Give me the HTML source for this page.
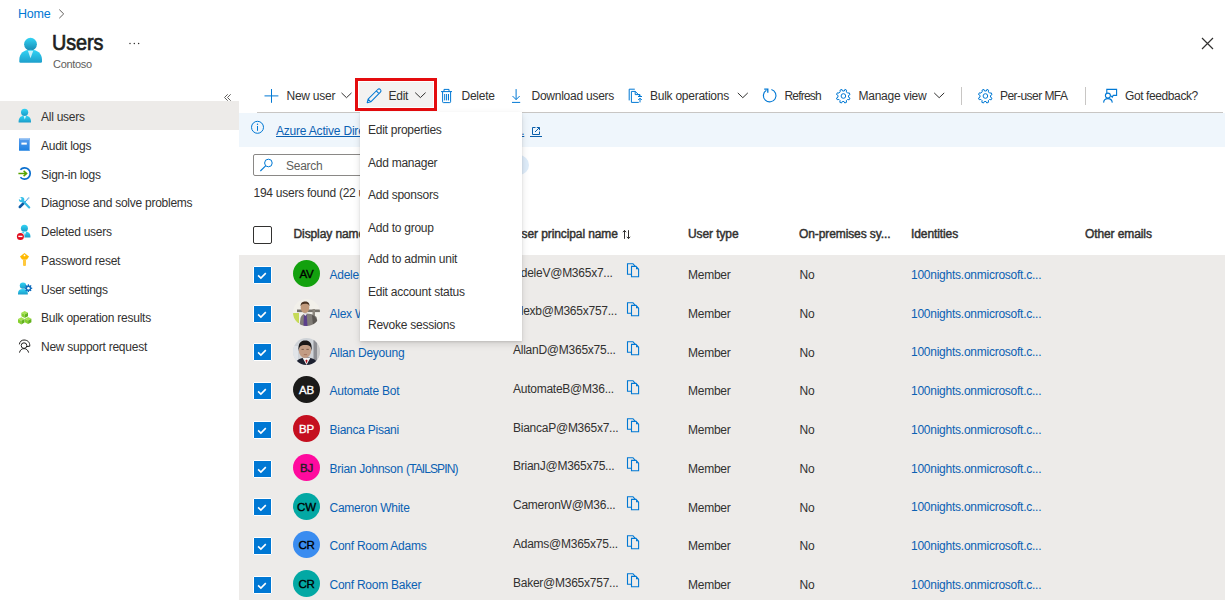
<!DOCTYPE html>
<html><head><meta charset="utf-8">
<style>
*{margin:0;padding:0;box-sizing:border-box}
html,body{width:1225px;height:600px;overflow:hidden;background:#fff}
body{position:relative;font-family:"Liberation Sans",sans-serif;color:#323130;font-size:12px;letter-spacing:-0.25px}
.a{position:absolute}
.t{position:absolute;white-space:nowrap;line-height:12px;font-size:12px}
svg{position:absolute;overflow:visible}
.nav{position:absolute;left:0;width:239px;height:28.75px}
.nav .t{left:41px;top:10px}
.row{position:absolute;left:239px;width:986px;height:38.75px;background:#edebe9}
.hd{font-weight:normal;font-size:12px;letter-spacing:-0.1px;-webkit-text-stroke:0.45px #323130}
.lnk{color:#0b61b3}
.cb{position:absolute;left:253.1px;width:18.8px;height:18px;background:#0078d4;border:1px solid #fff;border-radius:1px}
.av{position:absolute;left:293px;width:27px;height:27px;border-radius:50%;font-size:11.5px;line-height:28.5px;text-align:center;color:#000;letter-spacing:-0.2px;-webkit-text-stroke:0.35px currentColor}
.mi{position:absolute;left:368px;white-space:nowrap;line-height:12px;font-size:12px;color:#323130}
</style></head><body>

<!-- breadcrumb -->
<div class="t" style="left:18px;top:8px;font-size:12.5px;color:#0078d4">Home</div>
<svg style="left:59px;top:8.6px" width="6" height="10" viewBox="0 0 6 10"><path d="M0.3 0.6 L4.7 4.9 L0.3 9.2" fill="none" stroke="#605e5c" stroke-width="1"/></svg>

<!-- title icon -->
<svg style="left:19px;top:38px" width="23" height="25" viewBox="0 0 23 25">
<defs><linearGradient id="ug" x1="0" y1="0" x2="0" y2="1"><stop offset="0" stop-color="#32d4f5"/><stop offset="1" stop-color="#198ab3"/></linearGradient>
<linearGradient id="ug2" x1="0" y1="0" x2="0" y2="1"><stop offset="0" stop-color="#32d4f5"/><stop offset="1" stop-color="#1e9fcb"/></linearGradient></defs>
<circle cx="11.5" cy="6.2" r="6.4" fill="url(#ug)"/>
<path d="M0.3 22 C0.3 15 5 11.8 11.6 11.8 C18.2 11.8 23 15 23 22 V23.5 Q23 24.7 21.8 24.7 H1.5 Q0.3 24.7 0.3 23.5Z" fill="url(#ug2)"/>
<path d="M8.9 12.7 L11.5 20.2 L14.3 12.7Z" fill="#e6f8fd" opacity="0.85"/>
</svg>
<div class="t" style="left:52.4px;top:31.5px;font-size:22px;line-height:22px;font-weight:normal;letter-spacing:-0.1px;-webkit-text-stroke:0.7px #201f1e;color:#201f1e;transform:scaleX(0.9);transform-origin:0 0">Users</div>
<div class="t" style="left:53px;top:59px;font-size:11px;line-height:11px;color:#605e5c;letter-spacing:-0.3px">Contoso</div>
<svg style="left:1202px;top:38px" width="11" height="11" viewBox="0 0 11 11"><path d="M0 0 L11 11 M11 0 L0 11" stroke="#323130" stroke-width="1.2"/></svg>

<!-- nav -->
<svg style="left:224px;top:94px" width="8" height="7" viewBox="0 0 8 7"><path d="M3.7 0.3 L0.5 3.5 L3.7 6.7 M6.7 0.3 L3.5 3.5 L6.7 6.7" fill="none" stroke="#605e5c" stroke-width="1"/></svg>
<div class="nav" style="top:101px;background:#edebe9"><div class="t">All users</div></div>
<div class="nav" style="top:129.75px"><div class="t">Audit logs</div></div>
<div class="nav" style="top:158.5px"><div class="t">Sign-in logs</div></div>
<div class="nav" style="top:187.25px"><div class="t">Diagnose and solve problems</div></div>
<div class="nav" style="top:216px"><div class="t">Deleted users</div></div>
<div class="nav" style="top:244.75px"><div class="t">Password reset</div></div>
<div class="nav" style="top:273.5px"><div class="t">User settings</div></div>
<div class="nav" style="top:302.25px"><div class="t">Bulk operation results</div></div>
<div class="nav" style="top:331px"><div class="t">New support request</div></div>

<!-- toolbar -->
<div class="a" style="left:257px;top:112px;width:966px;height:1px;background:#c8c6c4"></div>
<div class="t" style="left:286.5px;top:90px">New user</div>
<div class="a" style="left:355px;top:78px;width:81.5px;height:32.7px;border:3px solid #e40c0e;padding:1px;background:#f3f2f1;background-clip:content-box"></div>
<div class="t" style="left:388.5px;top:90px">Edit</div>
<div class="t" style="left:461.5px;top:90px">Delete</div>
<div class="t" style="left:531.5px;top:90px">Download users</div>
<div class="t" style="left:650px;top:90px">Bulk operations</div>
<div class="t" style="left:784.5px;top:90px;letter-spacing:-0.8px">Refresh</div>
<div class="t" style="left:858.5px;top:90px">Manage view</div>
<div class="a" style="left:961px;top:87px;width:1px;height:18px;background:#c8c6c4"></div>
<div class="t" style="left:1000px;top:90px;letter-spacing:-0.55px">Per-user MFA</div>
<div class="a" style="left:1085px;top:87px;width:1px;height:18px;background:#c8c6c4"></div>
<div class="t" style="left:1125px;top:90px;letter-spacing:-0.4px">Got feedback?</div>

<!-- info bar -->
<div class="a" style="left:239px;top:113px;width:986px;height:33.5px;background:#eff6fc"></div>
<div class="t lnk" style="left:276px;top:125px;text-decoration:underline;letter-spacing:-0.2px">Azure Active Directory is now Microsoft Entra ID.</div>

<!-- search -->
<div class="a" style="left:253px;top:154px;width:250px;height:21.5px;border:1px solid #8a8886;border-radius:2px"></div>
<div class="t" style="left:286px;top:159.5px;color:#605e5c">Search</div>
<div class="a" style="left:470px;top:155px;width:59px;height:19.5px;border-radius:10px;background:#deecf9"></div>
<div class="t" style="left:253.5px;top:187px">194 users found (22 users selected)</div>

<!-- table header -->
<div class="a" style="left:253px;top:226px;width:19px;height:18px;border:1.5px solid #323130;border-radius:2px"></div>
<div class="t hd" style="left:293.5px;top:227.6px">Display name</div>
<div class="t hd" style="left:513px;top:227.6px">User principal name</div>
<div class="t hd" style="left:688px;top:227.6px">User type</div>
<div class="t hd" style="left:799px;top:227.6px">On-premises sy...</div>
<div class="t hd" style="left:911px;top:227.6px">Identities</div>
<div class="t hd" style="left:1085px;top:227.6px">Other emails</div>

<!-- rows -->
<div id="rows">
<div class="row" style="top:254.70px;height:38.25px"></div>
<div class="cb" style="top:265.80px"><svg style="left:0;top:0" width="17" height="16" viewBox="0 0 17 16"><path d="M4.1 8.4 L6.9 11.1 L11.8 6.1" fill="none" stroke="#fff" stroke-width="1.6"/></svg></div>
<div class="av" style="top:260.00px;background:#13a10e;color:#000">AV</div>
<div class="t lnk" style="left:329.5px;top:269.20px">Adele Vance</div>
<div class="t" style="left:513px;top:266.60px">AdeleV@M365x7...</div>
<svg style="left:627px;top:263.40px" width="13" height="15" viewBox="0 0 13 15"><path d="M4.1 11.2 H0.5 V0.7 H6 L8.2 3.4" fill="none" stroke="#0078d4" stroke-width="1.1"/><path d="M4.5 3.4 H9 L11.6 6.2 V13.7 H4.5Z" fill="none" stroke="#0078d4" stroke-width="1.1"/><path d="M9 3.4 L11.6 6.2 H9Z" fill="#0078d4"/></svg>
<div class="t" style="left:688px;top:269.00px">Member</div>
<div class="t" style="left:799.5px;top:269.00px">No</div>
<div class="t lnk" style="left:911px;top:268.80px">100nights.onmicrosoft.c...</div>
<div class="row" style="top:292.95px;height:38.75px"></div>
<div class="cb" style="top:304.55px"><svg style="left:0;top:0" width="17" height="16" viewBox="0 0 17 16"><path d="M4.1 8.4 L6.9 11.1 L11.8 6.1" fill="none" stroke="#fff" stroke-width="1.6"/></svg></div>
<svg style="left:293px;top:298.75px" width="27" height="27" viewBox="0 0 27 27"><defs><clipPath id="c1"><circle cx="13.5" cy="13.5" r="13.5"/></clipPath></defs><g clip-path="url(#c1)"><rect width="27" height="27" fill="#f2f0ea"/><rect x="4" y="10.5" width="23" height="2.6" fill="#77736c"/><rect x="19.5" y="10" width="2.5" height="12" fill="#8d887f"/><rect x="0" y="14" width="6" height="10" fill="#c6da58"/><path d="M6.5 27 L7.5 19 C8.5 16 10.5 14.8 13 14.6 C17 14.6 21 15.5 23.5 18 L25.5 27Z" fill="#817d78"/><path d="M19 16 C22 17 24 19 25.5 27 L20 27Z" fill="#5b5753"/><path d="M11 15 L10.5 27 L14.5 27 L13.6 15Z" fill="#5b3f8c"/><path d="M10.2 14.4 L12.4 17 L14.2 14.6Z" fill="#e8e6e6"/><ellipse cx="12" cy="8.6" rx="4.3" ry="5.4" fill="#c19a7c"/><path d="M7.6 7.6 C7.4 3.4 10 2.6 12.2 2.6 C15 2.6 16.8 4 16.4 7.6 C15.8 5.2 14.6 4.8 12 4.8 C9.6 4.8 8.2 5.4 7.6 7.6Z" fill="#4a3322"/></g></svg>
<div class="t lnk" style="left:329.5px;top:307.95px">Alex Wilber</div>
<div class="t" style="left:513px;top:305.35px">Alexb@M365x757...</div>
<svg style="left:627px;top:302.15px" width="13" height="15" viewBox="0 0 13 15"><path d="M4.1 11.2 H0.5 V0.7 H6 L8.2 3.4" fill="none" stroke="#0078d4" stroke-width="1.1"/><path d="M4.5 3.4 H9 L11.6 6.2 V13.7 H4.5Z" fill="none" stroke="#0078d4" stroke-width="1.1"/><path d="M9 3.4 L11.6 6.2 H9Z" fill="#0078d4"/></svg>
<div class="t" style="left:688px;top:307.75px">Member</div>
<div class="t" style="left:799.5px;top:307.75px">No</div>
<div class="t lnk" style="left:911px;top:307.55px">100nights.onmicrosoft.c...</div>
<div class="row" style="top:331.70px;height:38.75px"></div>
<div class="cb" style="top:343.30px"><svg style="left:0;top:0" width="17" height="16" viewBox="0 0 17 16"><path d="M4.1 8.4 L6.9 11.1 L11.8 6.1" fill="none" stroke="#fff" stroke-width="1.6"/></svg></div>
<svg style="left:293px;top:337.50px" width="27" height="27" viewBox="0 0 27 27"><defs><clipPath id="c2"><circle cx="13.5" cy="13.5" r="13.5"/></clipPath></defs><g clip-path="url(#c2)"><rect width="27" height="27" fill="#cfd3d8"/><rect x="0" y="8" width="5" height="14" fill="#e1e4e8"/><rect x="20.5" y="0" width="3.5" height="27" fill="#8e8f94"/><rect x="24" y="0" width="3" height="27" fill="#c8c8c8"/><path d="M2 27 C3 22.5 6.5 20.5 11 19.6 L16 19.6 C20.5 20.5 24 22.5 25 27Z" fill="#1d2130"/><path d="M9.5 19.8 L13.5 27 L17.5 19.8Z" fill="#f2f2f2"/><path d="M12.4 22.4 L13.5 25.6 L14.6 22.4 L13.5 21.4Z" fill="#b3121f"/><ellipse cx="12" cy="12.4" rx="6.2" ry="7.6" fill="#c29c84"/><path d="M5.6 13 C4.8 5 8 2.6 12.2 2.6 C16.6 2.6 19.4 5 18.6 13 C18 8.5 17 7 12.2 7 C7.6 7 6.2 8.5 5.6 13Z" fill="#1a1616"/><path d="M8.5 11.4 H10.8 M13.4 11.4 H15.8" stroke="#6a4a3a" stroke-width="0.8"/><path d="M10.8 16.6 H14" stroke="#9a6a58" stroke-width="0.8"/></g></svg>
<div class="t lnk" style="left:329.5px;top:346.70px">Allan Deyoung</div>
<div class="t" style="left:513px;top:344.10px">AllanD@M365x75...</div>
<svg style="left:627px;top:340.90px" width="13" height="15" viewBox="0 0 13 15"><path d="M4.1 11.2 H0.5 V0.7 H6 L8.2 3.4" fill="none" stroke="#0078d4" stroke-width="1.1"/><path d="M4.5 3.4 H9 L11.6 6.2 V13.7 H4.5Z" fill="none" stroke="#0078d4" stroke-width="1.1"/><path d="M9 3.4 L11.6 6.2 H9Z" fill="#0078d4"/></svg>
<div class="t" style="left:688px;top:346.50px">Member</div>
<div class="t" style="left:799.5px;top:346.50px">No</div>
<div class="t lnk" style="left:911px;top:346.30px">100nights.onmicrosoft.c...</div>
<div class="row" style="top:370.45px;height:38.75px"></div>
<div class="cb" style="top:382.05px"><svg style="left:0;top:0" width="17" height="16" viewBox="0 0 17 16"><path d="M4.1 8.4 L6.9 11.1 L11.8 6.1" fill="none" stroke="#fff" stroke-width="1.6"/></svg></div>
<div class="av" style="top:376.25px;background:#1b1a19;color:#fff">AB</div>
<div class="t lnk" style="left:329.5px;top:385.45px">Automate Bot</div>
<div class="t" style="left:513px;top:382.85px">AutomateB@M36...</div>
<svg style="left:627px;top:379.65px" width="13" height="15" viewBox="0 0 13 15"><path d="M4.1 11.2 H0.5 V0.7 H6 L8.2 3.4" fill="none" stroke="#0078d4" stroke-width="1.1"/><path d="M4.5 3.4 H9 L11.6 6.2 V13.7 H4.5Z" fill="none" stroke="#0078d4" stroke-width="1.1"/><path d="M9 3.4 L11.6 6.2 H9Z" fill="#0078d4"/></svg>
<div class="t" style="left:688px;top:385.25px">Member</div>
<div class="t" style="left:799.5px;top:385.25px">No</div>
<div class="t lnk" style="left:911px;top:385.05px">100nights.onmicrosoft.c...</div>
<div class="row" style="top:409.20px;height:38.75px"></div>
<div class="cb" style="top:420.80px"><svg style="left:0;top:0" width="17" height="16" viewBox="0 0 17 16"><path d="M4.1 8.4 L6.9 11.1 L11.8 6.1" fill="none" stroke="#fff" stroke-width="1.6"/></svg></div>
<div class="av" style="top:415.00px;background:#c50f1f;color:#fff">BP</div>
<div class="t lnk" style="left:329.5px;top:424.20px">Bianca Pisani</div>
<div class="t" style="left:513px;top:421.60px">BiancaP@M365x7...</div>
<svg style="left:627px;top:418.40px" width="13" height="15" viewBox="0 0 13 15"><path d="M4.1 11.2 H0.5 V0.7 H6 L8.2 3.4" fill="none" stroke="#0078d4" stroke-width="1.1"/><path d="M4.5 3.4 H9 L11.6 6.2 V13.7 H4.5Z" fill="none" stroke="#0078d4" stroke-width="1.1"/><path d="M9 3.4 L11.6 6.2 H9Z" fill="#0078d4"/></svg>
<div class="t" style="left:688px;top:424.00px">Member</div>
<div class="t" style="left:799.5px;top:424.00px">No</div>
<div class="t lnk" style="left:911px;top:423.80px">100nights.onmicrosoft.c...</div>
<div class="row" style="top:447.95px;height:38.75px"></div>
<div class="cb" style="top:459.55px"><svg style="left:0;top:0" width="17" height="16" viewBox="0 0 17 16"><path d="M4.1 8.4 L6.9 11.1 L11.8 6.1" fill="none" stroke="#fff" stroke-width="1.6"/></svg></div>
<div class="av" style="top:453.75px;background:#ff0a9e;color:#201f1e">BJ</div>
<div class="t lnk" style="left:329.5px;top:462.95px">Brian Johnson <span style="letter-spacing:-0.9px">(TAILSPIN)</span></div>
<div class="t" style="left:513px;top:460.35px">BrianJ@M365x75...</div>
<svg style="left:627px;top:457.15px" width="13" height="15" viewBox="0 0 13 15"><path d="M4.1 11.2 H0.5 V0.7 H6 L8.2 3.4" fill="none" stroke="#0078d4" stroke-width="1.1"/><path d="M4.5 3.4 H9 L11.6 6.2 V13.7 H4.5Z" fill="none" stroke="#0078d4" stroke-width="1.1"/><path d="M9 3.4 L11.6 6.2 H9Z" fill="#0078d4"/></svg>
<div class="t" style="left:688px;top:462.75px">Member</div>
<div class="t" style="left:799.5px;top:462.75px">No</div>
<div class="t lnk" style="left:911px;top:462.55px">100nights.onmicrosoft.c...</div>
<div class="row" style="top:486.70px;height:38.75px"></div>
<div class="cb" style="top:498.30px"><svg style="left:0;top:0" width="17" height="16" viewBox="0 0 17 16"><path d="M4.1 8.4 L6.9 11.1 L11.8 6.1" fill="none" stroke="#fff" stroke-width="1.6"/></svg></div>
<div class="av" style="top:492.50px;background:#03a8a4;color:#000">CW</div>
<div class="t lnk" style="left:329.5px;top:501.70px">Cameron White</div>
<div class="t" style="left:513px;top:499.10px">CameronW@M36...</div>
<svg style="left:627px;top:495.90px" width="13" height="15" viewBox="0 0 13 15"><path d="M4.1 11.2 H0.5 V0.7 H6 L8.2 3.4" fill="none" stroke="#0078d4" stroke-width="1.1"/><path d="M4.5 3.4 H9 L11.6 6.2 V13.7 H4.5Z" fill="none" stroke="#0078d4" stroke-width="1.1"/><path d="M9 3.4 L11.6 6.2 H9Z" fill="#0078d4"/></svg>
<div class="t" style="left:688px;top:501.50px">Member</div>
<div class="t" style="left:799.5px;top:501.50px">No</div>
<div class="t lnk" style="left:911px;top:501.30px">100nights.onmicrosoft.c...</div>
<div class="row" style="top:525.45px;height:38.75px"></div>
<div class="cb" style="top:537.05px"><svg style="left:0;top:0" width="17" height="16" viewBox="0 0 17 16"><path d="M4.1 8.4 L6.9 11.1 L11.8 6.1" fill="none" stroke="#fff" stroke-width="1.6"/></svg></div>
<div class="av" style="top:531.25px;background:#3a8cf0;color:#000">CR</div>
<div class="t lnk" style="left:329.5px;top:540.45px">Conf Room Adams</div>
<div class="t" style="left:513px;top:537.85px">Adams@M365x75...</div>
<svg style="left:627px;top:534.65px" width="13" height="15" viewBox="0 0 13 15"><path d="M4.1 11.2 H0.5 V0.7 H6 L8.2 3.4" fill="none" stroke="#0078d4" stroke-width="1.1"/><path d="M4.5 3.4 H9 L11.6 6.2 V13.7 H4.5Z" fill="none" stroke="#0078d4" stroke-width="1.1"/><path d="M9 3.4 L11.6 6.2 H9Z" fill="#0078d4"/></svg>
<div class="t" style="left:688px;top:540.25px">Member</div>
<div class="t" style="left:799.5px;top:540.25px">No</div>
<div class="t lnk" style="left:911px;top:540.05px">100nights.onmicrosoft.c...</div>
<div class="row" style="top:564.20px;height:38.75px"></div>
<div class="cb" style="top:575.80px"><svg style="left:0;top:0" width="17" height="16" viewBox="0 0 17 16"><path d="M4.1 8.4 L6.9 11.1 L11.8 6.1" fill="none" stroke="#fff" stroke-width="1.6"/></svg></div>
<div class="av" style="top:570.00px;background:#03a8a4;color:#000">CR</div>
<div class="t lnk" style="left:329.5px;top:579.20px">Conf Room Baker</div>
<div class="t" style="left:513px;top:576.60px">Baker@M365x757...</div>
<svg style="left:627px;top:573.40px" width="13" height="15" viewBox="0 0 13 15"><path d="M4.1 11.2 H0.5 V0.7 H6 L8.2 3.4" fill="none" stroke="#0078d4" stroke-width="1.1"/><path d="M4.5 3.4 H9 L11.6 6.2 V13.7 H4.5Z" fill="none" stroke="#0078d4" stroke-width="1.1"/><path d="M9 3.4 L11.6 6.2 H9Z" fill="#0078d4"/></svg>
<div class="t" style="left:688px;top:579.00px">Member</div>
<div class="t" style="left:799.5px;top:579.00px">No</div>
<div class="t lnk" style="left:911px;top:578.80px">100nights.onmicrosoft.c...</div>
</div>

<!-- icons overlay -->
<svg class="a" style="left:0;top:0" width="1225" height="600" viewBox="0 0 1225 600">
<defs>
<linearGradient id="pg" x1="0" y1="0" x2="0" y2="1"><stop offset="0" stop-color="#32d4f5"/><stop offset="1" stop-color="#1a9bc8"/></linearGradient>
<linearGradient id="bk" x1="0" y1="0" x2="0" y2="1"><stop offset="0" stop-color="#5ea0ef"/><stop offset="1" stop-color="#1b7fe0"/></linearGradient>
</defs>
<!-- title dots -->
<circle cx="130" cy="43.5" r="0.75" fill="#323130"/><circle cx="134.3" cy="43.5" r="0.75" fill="#323130"/><circle cx="138.6" cy="43.5" r="0.75" fill="#323130"/>
<!-- nav: all users -->
<g fill="url(#pg)"><circle cx="24.6" cy="112.3" r="3.6"/><path d="M18.6 121.6 C18.6 117.5 21 115.8 24.8 115.8 C28.6 115.8 31 117.5 31 121.6 L31 122.6 L18.6 122.6Z"/></g>
<path d="M23.6 116 L24.8 119.5 L26 116Z" fill="#fff" opacity=".85"/>
<!-- audit logs -->
<rect x="19" y="138.2" width="11" height="12.6" rx="0.6" fill="url(#bk)"/>
<rect x="20" y="138.2" width="9.8" height="1.4" fill="#a8cdf5"/>
<rect x="29" y="138.6" width="1" height="12" fill="#7fb6f0"/>
<rect x="21.4" y="142.6" width="5.4" height="2" fill="#fff"/>
<!-- sign-in -->
<path d="M20.4 169.8 A5.6 5.6 0 1 1 20.4 177.2" fill="none" stroke="#0a6fcf" stroke-width="1.7"/>
<path d="M18.4 173.5 H26.4 M23.6 170.9 L26.6 173.5 L23.6 176.1" fill="none" stroke="#57a300" stroke-width="1.5"/>
<!-- diagnose -->
<path d="M29.2 197.6 L23.6 203.2" stroke="#3a95dc" stroke-width="1.1" stroke-dasharray="1.1 0.5"/>
<path d="M23.8 203 L19.8 207" stroke="#0a5aa6" stroke-width="2.5" stroke-linecap="round"/>
<path d="M21.8 199.8 L29.2 207.4" stroke="#35b8e3" stroke-width="2.2" stroke-linecap="round"/>
<circle cx="21.6" cy="199.6" r="2.7" fill="#35c0ea"/>
<rect x="19.2" y="197.4" width="2" height="2.6" fill="#fff" transform="rotate(-45 20.2 198.7)"/>
<!-- deleted users -->
<g fill="url(#pg)"><circle cx="24.4" cy="228.3" r="3.5"/><path d="M19.8 236.6 C19.8 233.2 21.6 231.6 25 231.6 C28.4 231.6 30.4 233.2 30.4 236.6 L30.4 237.6 L19.8 237.6Z"/></g>
<path d="M23.6 231.8 L24.9 235.2 L26.2 231.8Z" fill="#fff" opacity=".85"/>
<circle cx="20.4" cy="236.4" r="4.1" fill="#fff"/><circle cx="20.4" cy="236.4" r="3.5" fill="#e00b1c"/>
<rect x="18.3" y="235.7" width="4.2" height="1.4" fill="#fff"/>
<!-- password reset key -->
<path d="M24.5 253 L29 256.5 L27 259.6 L22 259.6 L20 256.5Z" fill="#ffb900"/>
<rect x="23" y="259" width="3" height="7" rx="1" fill="#ffc83d"/>
<circle cx="24.5" cy="255.4" r="0.9" fill="#fff"/>
<!-- user settings -->
<g fill="url(#pg)"><circle cx="23" cy="285.6" r="3.2"/><path d="M18 293.6 C18 290.4 19.8 289 23 289 C26.2 289 27.8 290.4 27.8 293.6 L27.8 294.6 L18 294.6Z"/></g>
<path d="M32.26 287.65 L32.26 288.75 L31.21 288.92 L30.90 289.68 L31.52 290.54 L30.74 291.32 L29.88 290.70 L29.12 291.01 L28.95 292.06 L27.85 292.06 L27.68 291.01 L26.92 290.70 L26.06 291.32 L25.28 290.54 L25.90 289.68 L25.59 288.92 L24.54 288.75 L24.54 287.65 L25.59 287.48 L25.90 286.72 L25.28 285.86 L26.06 285.08 L26.92 285.70 L27.68 285.39 L27.85 284.34 L28.95 284.34 L29.12 285.39 L29.88 285.70 L30.74 285.08 L31.52 285.86 L30.90 286.72 L31.21 287.48Z" fill="#0f6cbd"/><circle cx="28.4" cy="288.2" r="1.3" fill="#fff"/>
<!-- bulk results cubes -->
<g><path d="M24.70 311.00 L28.00 312.75 L24.70 314.50 L21.40 312.75Z" fill="#a6e34f"/><path d="M21.40 312.75 L24.70 314.50 L24.70 318.00 L21.40 316.25Z" fill="#86d02e"/><path d="M24.70 314.50 L28.00 312.75 L28.00 316.25 L24.70 318.00Z" fill="#62b21c"/><path d="M21.30 317.20 L24.60 319.00 L21.30 320.80 L18.00 319.00Z" fill="#a6e34f"/><path d="M18.00 319.00 L21.30 320.80 L21.30 324.40 L18.00 322.60Z" fill="#86d02e"/><path d="M21.30 320.80 L24.60 319.00 L24.60 322.60 L21.30 324.40Z" fill="#62b21c"/><path d="M28.10 317.00 L31.40 318.75 L28.10 320.50 L24.80 318.75Z" fill="#a6e34f"/><path d="M24.80 318.75 L28.10 320.50 L28.10 324.00 L24.80 322.25Z" fill="#86d02e"/><path d="M28.10 320.50 L31.40 318.75 L31.40 322.25 L28.10 324.00Z" fill="#62b21c"/></g>
<!-- new support request -->
<g fill="none" stroke="#201f1e" stroke-width="1"><circle cx="24" cy="345.6" r="2.8"/><path d="M19.4 344.4 C19.6 341.6 21.6 340 24 340 C27.4 340 30 342 29.8 346.2 L26.6 346.6"/><path d="M19.5 352.6 C20 350 21.8 348.6 24 348.6 C26.2 348.6 28 350 28.6 352.6"/></g>
<!-- nav collapse << -->

<!-- toolbar icons -->
<path d="M271.5 89 V102.8 M264.5 95.9 H278.4" stroke="#0078d4" stroke-width="1"/>
<path d="M341.5 92.9 L346.5 97.7 L351.5 92.9" fill="none" stroke="#323130" stroke-width="1"/>
<path d="M367.2 102.7 L368.1 99.1 L377.7 89.5 A1.9 1.9 0 0 1 380.4 92.2 L370.8 101.8 Z M368.1 99.1 L370.8 101.8 M376.3 90.9 L379 93.6" fill="none" stroke="#0078d4" stroke-width="1.05" stroke-linejoin="round"/>
<path d="M415.2 92.6 L420.4 97.6 L425.6 92.6" fill="none" stroke="#323130" stroke-width="1"/>
<path d="M441 91.6 H452 M444 91.6 V89.4 H449 V91.6 M442.6 91.6 V101.8 Q442.6 102.6 443.4 102.6 H449.8 Q450.6 102.6 450.6 101.8 V91.6 M444.7 94 V100.4 M446.6 94 V100.4 M448.5 94 V100.4" fill="none" stroke="#0078d4" stroke-width="1"/>
<path d="M516.1 89.1 V99.6 M512.5 96 L516.1 99.6 L519.7 96 M512 102.4 H520.2" fill="none" stroke="#0078d4" stroke-width="1"/>
<path d="M629.2 100.4 V89.2 H634.8 M638.8 102.4 H631.4 V91.4 H635.2 L640 96 V94.6 M635.2 91.4 V94.6 H640 M638 96.5 H642 M640 102.4 V98.4 M638.2 100 L640 98.2 L641.8 100" fill="none" stroke="#0078d4" stroke-width="1"/>
<path d="M737.8 92.9 L742.8 97.7 L747.8 92.9" fill="none" stroke="#323130" stroke-width="1"/>
<path d="M771.4 89.5 A6.3 6.3 0 1 1 766.4 90.2" fill="none" stroke="#0078d4" stroke-width="1.1"/>
<path d="M764.2 89.1 H767.8 V92.7" fill="none" stroke="#0078d4" stroke-width="1.3"/>
<g transform="translate(843.4 96)" fill="none" stroke="#0078d4" stroke-width="1"><path id="gearp" d="M-1.5 -6.6 L-0.9 -5 L0.9 -5 L1.5 -6.6 L3.2 -5.8 L3 -4.1 L4.2 -2.9 L5.9 -3.1 L6.6 -1.4 L5.1 -0.5 L5.1 1.2 L6.6 2.1 L5.8 3.8 L4.1 3.5 L2.9 4.7 L3.1 6.3 L1.4 7 L0.6 5.5 L-1.1 5.5 L-1.9 7 L-3.6 6.3 L-3.3 4.6 L-4.5 3.4 L-6.2 3.7 L-6.9 2 L-5.4 1.1 L-5.4 -0.6 L-6.9 -1.5 L-6.1 -3.2 L-4.4 -2.9 L-3.2 -4.1 L-3.4 -5.8Z"/><circle r="2.3"/></g>
<path d="M934.2 92.9 L939.2 97.7 L944.2 92.9" fill="none" stroke="#323130" stroke-width="1"/>
<g transform="translate(985.4 96)" fill="none" stroke="#0078d4" stroke-width="1"><use href="#gearp"/><circle r="2.3"/></g>
<path d="M1106.8 93 V89.4 H1116.6 V95.4 H1113.2 L1112.2 97.2 L1111.2 95.8" fill="none" stroke="#0078d4" stroke-width="1.1"/>
<circle cx="1107.9" cy="95.6" r="2.5" fill="none" stroke="#0078d4" stroke-width="1.1"/>
<path d="M1103.6 102.6 C1103.8 99.8 1105.6 98.6 1107.9 98.6 C1110.2 98.6 1112 99.8 1112.3 102.6" fill="none" stroke="#0078d4" stroke-width="1.1"/>
<!-- close X -->
<!-- info icon -->
<circle cx="257.5" cy="127.3" r="6" fill="none" stroke="#0078d4" stroke-width="1"/>
<path d="M257.5 126 V130.8" stroke="#0078d4" stroke-width="1"/><circle cx="257.5" cy="124.2" r="0.7" fill="#0078d4"/>
<!-- ext link -->
<path d="M535.5 127.5 H532.5 V134.5 H539.5 V131.5 M535 132 L539.4 127.6 M536.8 127.5 H539.5 V130.2" fill="none" stroke="#0a5eaa" stroke-width="1"/>
<path d="M530 136.5 H542" stroke="#0a5eaa" stroke-width="1"/>
<!-- search icon -->
<circle cx="268.4" cy="163" r="3.8" fill="none" stroke="#0078d4" stroke-width="1"/>
<path d="M265.6 165.8 L260.4 171" stroke="#0078d4" stroke-width="1.1"/>
<!-- sort icon -->
<path d="M624.5 230.4 V238.8 M622.8 232.2 L624.5 230.4 L626.2 232.2 M628.5 230.2 V238.6 M626.8 236.8 L628.5 238.6 L630.2 236.8" fill="none" stroke="#323130" stroke-width="1"/>
</svg>

<!-- menu -->
<div class="a" style="left:359.6px;top:112px;width:162.6px;height:228.5px;background:#fff;box-shadow:0 3.2px 7.2px rgba(0,0,0,.13),0 0.6px 1.8px rgba(0,0,0,.11)"></div>
<div class="mi" style="top:124px">Edit properties</div>
<div class="mi" style="top:157px">Add manager</div>
<div class="mi" style="top:188.6px">Add sponsors</div>
<div class="mi" style="top:222px">Add to group</div>
<div class="mi" style="top:253.4px">Add to admin unit</div>
<div class="mi" style="top:285.8px">Edit account status</div>
<div class="mi" style="top:318.8px">Revoke sessions</div>

</body></html>
